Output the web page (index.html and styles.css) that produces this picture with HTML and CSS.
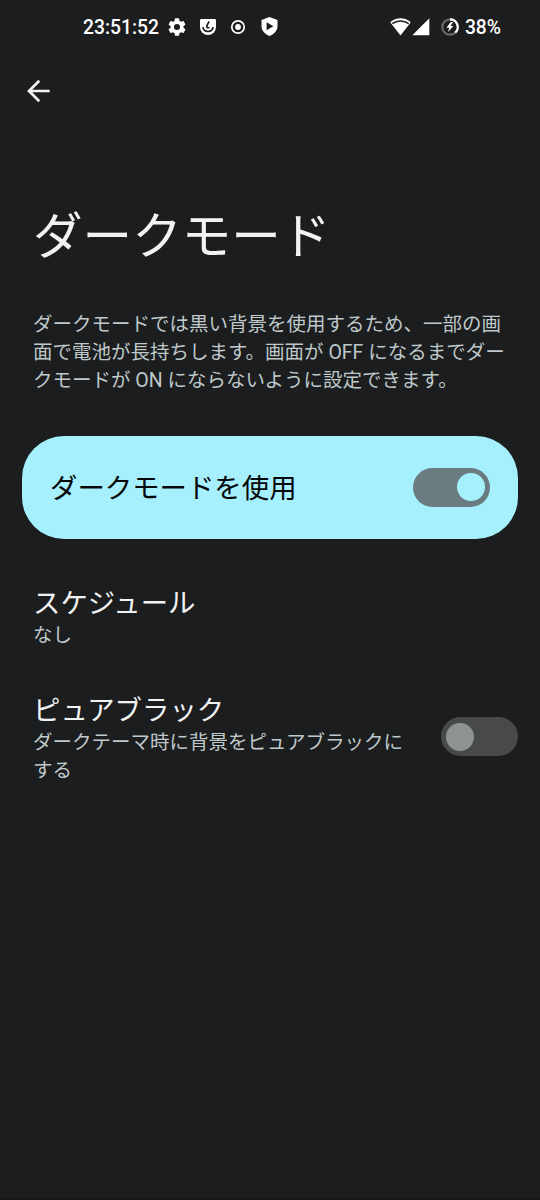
FILE: index.html
```html
<!DOCTYPE html>
<html lang="ja">
<head>
<meta charset="utf-8">
<title>ダークモード</title>
<link rel="stylesheet" href="styles.css">
</head>
<body>
<header class="status">
  <span class="clock">23:51:52</span>
  <svg class="gear" viewBox="2 2 20 20"><path fill="currentColor" d="M19.14 12.94c.04-.3.06-.61.06-.94s-.02-.64-.07-.94l2.03-1.58a.49.49 0 0 0 .12-.61l-1.92-3.32a.49.49 0 0 0-.59-.22l-2.39.96a7 7 0 0 0-1.62-.94l-.36-2.54a.48.48 0 0 0-.48-.41h-3.84a.48.48 0 0 0-.47.41l-.36 2.54c-.59.24-1.13.57-1.62.94l-2.39-.96a.48.48 0 0 0-.59.22L2.74 8.87a.48.48 0 0 0 .12.61l2.03 1.58a6 6 0 0 0 0 1.88l-2.03 1.58a.49.49 0 0 0-.12.61l1.92 3.32c.12.22.37.29.59.22l2.39-.96c.5.38 1.03.7 1.62.94l.36 2.54c.05.24.24.41.48.41h3.84c.24 0 .44-.17.47-.41l.36-2.54a7 7 0 0 0 1.62-.94l2.39.96c.22.08.47 0 .59-.22l1.92-3.32a.48.48 0 0 0-.12-.61zM12 15.4a3.4 3.4 0 1 1 0-6.8 3.4 3.4 0 0 1 0 6.8z"/></svg>
  <svg class="badge" viewBox="0 0 16 16"><path fill="currentColor" d="M1.3 0h13.4Q16 0 16 1.3V8a8 8 0 0 1-16 0V1.300Q0 0 1.300 0z"/><path class="cut" d="M2.800 8.200a5.300 5.300 0 0 0 10.400 0M9.100 2.300L6.900 6.600v1.300q0 1.100 2.500.8"/></svg>
  <svg class="target" viewBox="0 0 14 14"><circle cx="7" cy="7" r="6.200" fill="none" stroke="currentColor" stroke-width="1.700"/><circle cx="7" cy="7" r="2.900" fill="currentColor"/></svg>
  <svg class="shield" viewBox="0 0 17 19"><path fill="currentColor" d="M8.500 0L16.500 3v6c0 4.600-3.300 8.300-8 10C3.800 17.300.500 13.600.500 9V3z"/><path class="hole" d="M5.600 5.300l6.800 4-6.800 4z"/></svg>
  <span class="system">
    <svg class="wifi" viewBox="0 0 21 18"><path fill="currentColor" d="M10.500 17.600L.2 4.300C6-1.100 15-1.100 20.800 4.300z"/><path class="arc" d="M2.300 5.700C7 2.100 14 2.100 18.700 5.700"/></svg>
    <svg class="signal" viewBox="0 0 18 18"><path fill="currentColor" d="M17.300.3v17H.3z"/></svg>
    <svg class="battery" viewBox="0 0 18 18"><circle class="ring" cx="9" cy="9" r="7.700"/><path class="level" d="M9 1.300a7.700 7.700 0 0 1 5.300 13.300"/><path fill="currentColor" d="M9.700 4L5.500 9.800h2.700L7 14l5.500-6H9.600l2.500-4z"/></svg>
    <span class="percent">38%</span>
  </span>
</header>
<nav class="toolbar">
  <svg class="back" viewBox="0 0 24 24"><path d="M22.700 12H2.500M12.300 1.700L2 12l10.300 10.300"/></svg>
</nav>
<main>
  <h1>ダークモード</h1>
  <p class="intro">ダークモードでは黒い背景を使用するため、一部の画<br>面で電池が長持ちします。画面が OFF になるまでダー<br>クモードが ON にならないように設定できます。</p>
  <section class="card">
    <span class="title">ダークモードを使用</span>
    <span class="switch on"><i class="thumb"></i></span>
  </section>
  <section class="row schedule">
    <div>
      <div class="title">スケジュール</div>
      <div class="summary">なし</div>
    </div>
  </section>
  <section class="row">
    <div>
      <div class="title">ピュアブラック</div>
      <div class="summary">ダークテーマ時に背景をピュアブラックに<br>する</div>
    </div>
    <span class="switch"><i class="thumb"></i></span>
  </section>
</main>
</body>
</html>
```
FILE: styles.css
```css
* { box-sizing: border-box; }
body {
  margin: 0;
  height: 1200px;
  overflow: hidden;
  background: #1b1d1e;
  color: #f1f2f3;
  font-family: Roboto, "Noto Sans CJK JP", sans-serif;
  border-bottom: 2px solid #171818;
}
svg { display: block; flex: none; overflow: visible; }
.status {
  display: flex;
  align-items: center;
  height: 53px;
  padding: 0 39px 0 83px;
  color: #fff;
  font-size: 19.300px;
  font-weight: 500;
}
.clock { width: 77px; white-space: nowrap; }
.clock, .percent { padding-top: 1px; }
.gear { width: 18px; height: 18px; margin-left: 8px; }
.badge { width: 16px; height: 16px; margin-left: 14px; }
.target { width: 14px; height: 14px; margin-left: 15px; }
.shield { width: 17px; height: 19px; margin-left: 15.500px; }
.cut { fill: none; stroke: #1b1d1e; stroke-width: 1.700; }
.hole { fill: #1b1d1e; }
.system { display: flex; align-items: center; margin-left: auto; }
.wifi { width: 21px; height: 18px; }
.arc { fill: none; stroke: #1b1d1e; stroke-width: 1.500; }
.signal { width: 18px; height: 18px; margin-left: 1.500px; }
.battery { width: 18px; height: 18px; margin: 0 6px 0 10.500px; }
.ring, .level { fill: none; stroke: #68696a; stroke-width: 2.200; }
.level { stroke: #fff; }
.toolbar { display: flex; align-items: center; height: 76px; padding-left: 26.500px; }
.back { width: 24px; height: 24px; fill: none; stroke: #f1f2f3; stroke-width: 2.700; }
h1 {
  margin: 72px 0 0 33px;
  font-size: 49.600px;
  font-weight: 400;
  line-height: 72px;
}
.intro {
  margin: 38px 0 0 33px;
  white-space: nowrap;
}
.intro, .summary { color: #bfc8ca; font-size: 19.500px; line-height: 28px; }
.card {
  display: flex;
  align-items: center;
  justify-content: space-between;
  height: 103px;
  margin: 40.500px 22px 0;
  padding: 0 28px;
  border-radius: 42px;
  background: #a6effd;
  color: #050808;
}
.card .title { padding-top: 4px; }
.title { font-size: 27.400px; line-height: 36px; white-space: nowrap; }
.switch {
  display: flex;
  align-items: center;
  width: 77px;
  height: 39px;
  padding: 0 5px;
  border-radius: 20px;
  background: #48494a;
}
.row .title { line-height: 35px; }
.row .switch { margin-bottom: 5px; }
.thumb { width: 28px; height: 28px; border-radius: 50%; background: #8d9293; }
.on { justify-content: flex-end; background: #6a7c80; }
.on .thumb { background: #a6effd; }
.row {
  display: flex;
  align-items: center;
  justify-content: space-between;
  margin: 44px 22px 0 33px;
}
.schedule { margin-top: 48px; }
```
